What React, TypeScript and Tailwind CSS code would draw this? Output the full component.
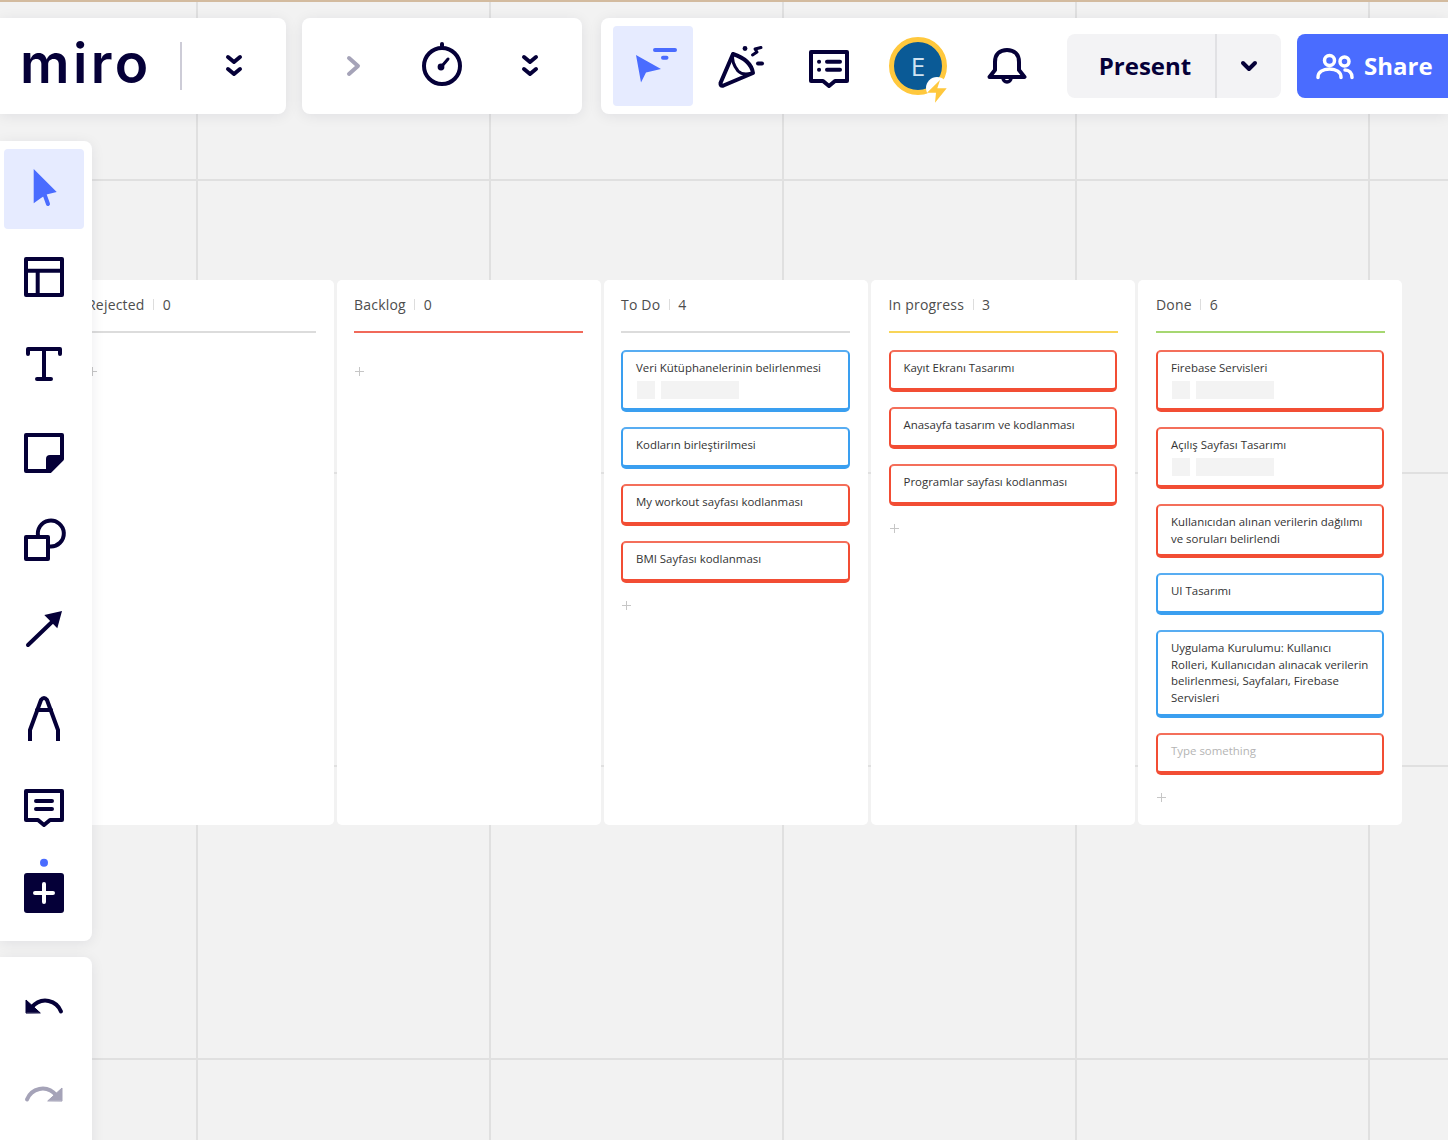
import React from 'react';

const INK = '#050038';
const BLUE = '#4a6cff';
const GREY = '#a5a3b8';

type Card = { text: string; color: string; height: string; tags?: boolean; placeholder?: boolean };
type Column = { title: string; count: number; line: string; pad: string; list: string; cards: Card[]; plus: string };

const blue = 'border-[#3a9ff0] border-t-[#58adf2]';
const red = 'border-[#f24d34] border-t-[#f46f5b]';

const columns: Column[] = [
  { title: 'Rejected', count: 0, line: 'bg-[#dcdcdc]', pad: 'pl-[17px]', list: 'w-[229px]', cards: [], plus: 'mt-[12px]' },
  { title: 'Backlog', count: 0, line: 'bg-[#f1695a]', pad: 'pl-[17px]', list: 'w-[229px]', cards: [], plus: 'mt-[12px]' },
  {
    title: 'To Do',
    count: 4,
    line: 'bg-[#dcdcdc]',
    pad: 'pl-[17px]',
    list: 'w-[229px]',
    plus: 'mt-[-2px]',
    cards: [
      { text: 'Veri Kütüphanelerinin belirlenmesi', color: blue, height: 'h-[62px]', tags: true },
      { text: 'Kodların birleştirilmesi', color: blue, height: 'h-[42px]' },
      { text: 'My workout sayfası kodlanması', color: red, height: 'h-[42px]' },
      { text: 'BMI Sayfası kodlanması', color: red, height: 'h-[42px]' },
    ],
  },
  {
    title: 'In progress',
    count: 3,
    line: 'bg-[#f8d558]',
    pad: 'pl-[17.5px]',
    list: 'w-[228px]',
    plus: 'mt-[-2px]',
    cards: [
      { text: 'Kayıt Ekranı Tasarımı', color: red, height: 'h-[42px]' },
      { text: 'Anasayfa tasarım ve kodlanması', color: red, height: 'h-[42px]' },
      { text: 'Programlar sayfası kodlanması', color: red, height: 'h-[42px]' },
    ],
  },
  {
    title: 'Done',
    count: 6,
    line: 'bg-[#a6d771]',
    pad: 'pl-[18px]',
    list: 'w-[228px]',
    plus: 'mt-[-2px]',
    cards: [
      { text: 'Firebase Servisleri', color: red, height: 'h-[62px]', tags: true },
      { text: 'Açılış Sayfası Tasarımı', color: red, height: 'h-[62px]', tags: true },
      { text: 'Kullanıcıdan alınan verilerin dağılımı ve soruları belirlendi', color: red, height: 'h-[54px]' },
      { text: 'UI Tasarımı', color: blue, height: 'h-[42px]' },
      {
        text: 'Uygulama Kurulumu: Kullanıcı Rolleri, Kullanıcıdan alınacak verilerin belirlenmesi, Sayfaları, Firebase Servisleri',
        color: blue,
        height: 'h-[88px]',
      },
      { text: 'Type something', color: red, height: 'h-[42px]', placeholder: true },
    ],
  },
];

function Icon({ box = '0 0 48 48', children }: { box?: string; children: React.ReactNode }) {
  return (
    <svg
      viewBox={box}
      fill="none"
      stroke={INK}
      strokeWidth={4}
      strokeLinecap="round"
      strokeLinejoin="round"
      className="w-12 h-12 overflow-visible"
    >
      {children}
    </svg>
  );
}

function DoubleChevron({ x }: { x: number }) {
  return (
    <Icon box={`${x - 24} 42 48 48`}>
      <path d={`M${x - 6} 57 L${x} 62 L${x + 6} 57 M${x - 6} 69 L${x} 74 L${x + 6} 69`} />
    </Icon>
  );
}

function Cell({ active, children }: { active?: boolean; children: React.ReactNode }) {
  return (
    <div className={`w-20 h-20 flex items-center justify-center rounded-[4px] shrink-0 ${active ? 'bg-[#e6ebff]' : ''}`}>
      {children}
    </div>
  );
}

function TopBar() {
  return (
    <div className="absolute left-0 right-0 top-[18px] flex h-24">
      <div className="w-[286px] shrink-0 flex items-center bg-white rounded-r-lg shadow-[0_2px_14px_rgba(5,0,56,0.08)]">
        <div className="w-[180px] pl-5 text-[55px] leading-none font-semibold tracking-[3.4px] text-[#050038] font-['Inter',sans-serif] pb-[5px]">
          miro
        </div>
        <div className="w-[2px] h-12 bg-[#cdccd7]" />
        <div className="flex-1 flex justify-center">
          <DoubleChevron x={234} />
        </div>
      </div>

      <div className="ml-4 w-[280px] shrink-0 flex items-center gap-2 pl-3 bg-white rounded-lg shadow-[0_2px_14px_rgba(5,0,56,0.08)]">
        <Cell>
          <Icon box="330 42 48 48">
            <path d="M349 58 L358 66 L349 74" stroke={GREY} />
          </Icon>
        </Cell>
        <Cell>
          <Icon box="418 42 48 48">
            <circle cx="442" cy="66" r="18" />
            <path d="M442 44 V46" />
            <path d="M442 66 L448 59" strokeWidth={3} />
            <circle cx="441" cy="67" r="3.4" fill={INK} stroke="none" />
          </Icon>
        </Cell>
        <Cell>
          <DoubleChevron x={530} />
        </Cell>
      </div>

      <div className="ml-[19px] flex-1 flex items-center gap-2 pl-3 bg-white rounded-l-lg shadow-[0_2px_14px_rgba(5,0,56,0.08)] overflow-hidden">
        <Cell active>
          <Icon box="629 42 48 48">
            <path d="M636 55 L661 69 L646 72.5 L641 82.5 Z" fill={BLUE} stroke="none" />
            <path d="M655 50 H675 M663 57.7 H666.5" stroke={BLUE} />
          </Icon>
        </Cell>
        <Cell>
          <Icon box="717 42 48 48">
            <path d="M733 54 L720.5 83 Q720 86.5 723.5 85.5 L753 73 Q751 60 733 54 Z" />
            <path d="M733 54 Q731 62 738 71 Q743 76 752 73" strokeWidth={3} />
            <circle cx="745" cy="48.5" r="2.4" fill={INK} stroke="none" />
            <path d="M752.5 55 L757 52 L755 49 L761 47.5" strokeWidth={3} />
            <path d="M758 63.5 H762" />
          </Icon>
        </Cell>
        <Cell>
          <Icon box="805 42 48 48">
            <path d="M811 52 H847 V81 H835 L829 86 L823 81 H811 Z" />
            <path d="M827 61.7 H840 M827 69.7 H840 M819 61.7 H819.1 M819 69.7 H819.1" />
          </Icon>
        </Cell>
        <Cell>
          <div className="relative ml-[2px] w-[58px] h-[58px] rounded-full bg-[#0a5a96] border-[5px] border-[#ffc83d] flex items-center justify-center text-[26px] leading-none text-[#cfe3f2] font-['Open_Sans',sans-serif]">
            E
            <svg viewBox="0 0 30 30" className="absolute left-[32px] top-[33px] w-[30px] h-[30px]">
              <circle cx="11" cy="13" r="11" fill="#ffffff" />
              <path d="M14 5 L1 17.7 H10 L9 27.7 L20.7 13.3 H11.3 Z" fill="#ffc83d" />
            </svg>
          </div>
        </Cell>
        <Cell>
          <Icon box="981 42 48 48">
            <path d="M989.5 77 L995 70 V62 C995 54 1000 50 1007 50 C1014 50 1019 54 1019 62 V70 L1024.5 77 Z" />
            <path d="M1003 78 A4 4 0 0 0 1011 78" strokeWidth={3.5} />
          </Icon>
        </Cell>

        <div className="ml-[14px] w-[214px] h-16 shrink-0 flex items-center rounded-lg bg-[#f3f3f5]">
          <div className="w-[148px] pl-2 text-center text-[24px] font-bold text-[#050038] font-['Open_Sans',sans-serif]">
            Present
          </div>
          <div className="w-[2px] h-16 bg-[#e1e1e4]" />
          <div className="flex-1 flex justify-center">
            <Icon box="1225 42 48 48">
              <path d="M1243 63 L1249 69 L1255 63" />
            </Icon>
          </div>
        </div>

        <div className="w-[170px] h-16 ml-2 shrink-0 flex items-center gap-[10px] pl-[19px] rounded-l-lg bg-[#4a6cff] text-[24px] font-bold text-white font-['Open_Sans',sans-serif]">
          <svg viewBox="1316 50 38 30" fill="none" stroke="#ffffff" strokeWidth={3.5} strokeLinecap="round" className="w-[38px] h-[30px] shrink-0">
            <circle cx="1329.5" cy="59.5" r="5" />
            <circle cx="1344.5" cy="60.5" r="4.5" />
            <path d="M1318 76.5 C1318 71 1323 68 1329.5 68 C1336 68 1341 71 1341 76.5" />
            <path d="M1345 69 C1349 69 1352 72 1352 76.5" />
          </svg>
          Share
        </div>
      </div>
    </div>
  );
}

function SideBar() {
  return (
    <>
      <div className="absolute left-0 top-[141px] w-[92px] flex flex-col gap-2 pl-1 py-2 bg-white rounded-r-lg shadow-[0_2px_14px_rgba(5,0,56,0.08)]">
        <Cell active>
          <Icon>
            <path d="M13.7 4 L36.7 27 L26.5 29.5 L21 33 L13.7 38.3 Z" fill={BLUE} stroke="none" />
            <path d="M24 28 L28 39" stroke={BLUE} />
          </Icon>
        </Cell>
        <Cell>
          <Icon>
            <rect x="6" y="6" width="36" height="36" />
            <path d="M6 17.7 H42 M17.7 17.7 V42" />
          </Icon>
        </Cell>
        <Cell>
          <Icon>
            <path d="M8 13 V8 H40 V13 M24 8 V38 M17 38 H31" />
          </Icon>
        </Cell>
        <Cell>
          <Icon>
            <path d="M6 6 H42 V30 L30 42 H6 Z" />
            <path d="M42 26 H30 Q26 26 26 30 V42 H30 L42 30 Z" fill={INK} stroke="none" />
          </Icon>
        </Cell>
        <Cell>
          <Icon>
            <rect x="6" y="20" width="22" height="22" />
            <path d="M18.3 20 A13 13 0 1 1 30 29.5" />
          </Icon>
        </Cell>
        <Cell>
          <Icon>
            <path d="M8 40 L33 16" />
            <path d="M42 6 L24.3 10 L37.3 23.3 Z" fill={INK} stroke="none" />
          </Icon>
        </Cell>
        <Cell>
          <Icon>
            <path d="M10 48 V37 L21 7 Q24 3 27 7 L38 37 V48" strokeLinecap="butt" />
            <path d="M17 17 H31" />
          </Icon>
        </Cell>
        <Cell>
          <Icon>
            <path d="M6 10 H42 V39 H30 L24 44 L18 39 H6 Z" />
            <path d="M16 20 H32 M16 28 H32" />
          </Icon>
        </Cell>
        <Cell>
          <Icon>
            <circle cx="24" cy="-6.3" r="4" fill={BLUE} stroke="none" />
            <rect x="4" y="4" width="40" height="40" rx="3" fill={INK} stroke="none" />
            <path d="M15 24 H33 M24 15 V33" stroke="#ffffff" />
          </Icon>
        </Cell>
      </div>

      <div className="absolute left-0 top-[957px] w-[92px] h-[200px] flex flex-col gap-2 pl-1 pt-[10px] bg-white rounded-r-lg shadow-[0_2px_14px_rgba(5,0,56,0.08)]">
        <Cell>
          <Icon>
            <path d="M41 28.5 C37 18 22 12 11 25" />
            <path d="M6 29.7 V17 L20 29.7 Z" fill={INK} strokeWidth={1} />
          </Icon>
        </Cell>
        <Cell>
          <Icon>
            <path d="M7 28.5 C11 18 26 12 37 25" stroke={GREY} />
            <path d="M42 29.7 V17 L28 29.7 Z" fill={GREY} stroke={GREY} strokeWidth={1} />
          </Icon>
        </Cell>
      </div>
    </>
  );
}

function KanbanCard({ card }: { card: Card }) {
  return (
    <div
      className={`w-full shrink-0 ${card.height} bg-white rounded-[5px] border-2 border-b-4 ${card.color} pl-[13px] pr-[12.5px] pt-[8px] text-[11.45px] leading-[16.5px] ${
        card.placeholder ? 'text-[#b4b4b4]' : 'text-[#333333]'
      }`}
    >
      <div>{card.text}</div>
      {card.tags && (
        <div className="flex gap-[6px] mt-[4px] ml-[1px]">
          <div className="w-[18px] h-[18px] bg-[#f3f3f3]" />
          <div className="w-[78px] h-[18px] bg-[#f3f3f3]" />
        </div>
      )}
    </div>
  );
}

function BoardColumn({ column }: { column: Column }) {
  return (
    <div className={`w-[264px] h-[545px] shrink-0 bg-white rounded-[5px] ${column.pad} pt-[15px]`}>
      <div className="flex items-center h-[18px] text-[14px] tracking-[0.2px] text-[#4d4d4d]">
        <span>{column.title}</span>
        <span className="w-px h-[11px] bg-[#dddddd] mx-[8.5px]" />
        <span>{column.count}</span>
      </div>
      <div className={`w-[229px] h-[2px] mt-[18px] ${column.line}`} />
      <div className={`${column.list} flex flex-col gap-[15px] mt-[17px]`}>
        {column.cards.map((card) => (
          <KanbanCard key={card.text} card={card} />
        ))}
        <div className={`${column.plus} pt-[4px] w-[11px] text-[#c6c6c6]`}>
          <svg viewBox="0 0 11 11" fill="none" stroke="currentColor" className="w-[11px] h-[11px]">
            <path d="M5.5 1 V10 M1 5.5 H10" />
          </svg>
        </div>
      </div>
    </div>
  );
}

export default function App() {
  return (
    <div className="relative w-full h-[1140px] overflow-hidden bg-[#f2f2f2] bg-[linear-gradient(to_right,#e0e0e0_2px,transparent_2px),linear-gradient(to_bottom,#e0e0e0_2px,transparent_2px)] bg-[size:293px_293px] bg-[position:196px_179px] font-['Open_Sans',sans-serif]">
      <div className="absolute inset-x-0 top-0 h-[2px] bg-[#d3bb9f]" />

      <div className="absolute left-[70px] top-[280px] flex gap-[3px]">
        {columns.map((column) => (
          <BoardColumn key={column.title} column={column} />
        ))}
      </div>

      <TopBar />
      <SideBar />
    </div>
  );
}
